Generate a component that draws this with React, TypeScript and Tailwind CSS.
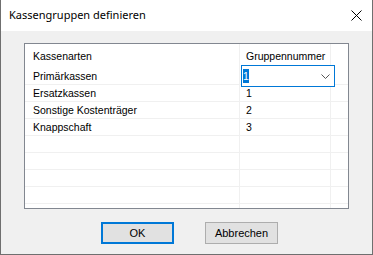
const rows = [
  { name: "Primärkassen", group: "" },
  { name: "Ersatzkassen", group: "1" },
  { name: "Sonstige Kostenträger", group: "2" },
  { name: "Knappschaft", group: "3" },
  { name: "", group: "" },
  { name: "", group: "" },
  { name: "", group: "" },
  { name: "", group: "" },
  { name: "", group: "" },
];

const cellFont = "font-['Liberation_Sans',Arial,sans-serif] text-[10.5px] text-black";

function GridRow({ name, group }: { name: string; group: string }) {
  return (
    <div className="flex h-[17px] shrink-0 border-b border-[#f0f0f0]">
      <div className="w-[215px] shrink-0 border-r border-[#f0f0f0] pl-[8px] leading-[17px]">{name}</div>
      <div className="w-[91px] shrink-0 border-r border-[#f0f0f0] pl-[6px] leading-[17px]">{group}</div>
      <div className="flex-1" />
    </div>
  );
}

export default function App() {
  return (
    <div className="w-[373px] h-[255px] flex flex-col bg-[#f0f0f0] border-l border-r border-b border-[#6f6f6f] overflow-hidden">
      <div className="h-[31px] shrink-0 bg-white flex items-center justify-between pl-[8px] pr-[9px]">
        <span className="font-['Noto_Sans',sans-serif] text-[11px] text-black">Kassengruppen definieren</span>
        <svg width="11" height="11" viewBox="0 0 11 11" className="mr-[1px]">
          <path d="M0.5 0.5 L10.5 10.5 M10.5 0.5 L0.5 10.5" stroke="#000" strokeWidth="1" />
        </svg>
      </div>

      <div className={`flex-1 flex flex-col ${cellFont}`}>
        <div className="relative mt-[12px] ml-[23px] w-[325px] h-[166px] border border-[#828790] bg-white overflow-hidden flex flex-col">
          <div className="flex h-[24px] shrink-0">
            <div className="w-[215px] shrink-0 border-r border-[#f0f0f0] pl-[8px] leading-[24px]">Kassenarten</div>
            <div className="w-[91px] shrink-0 border-r border-[#f0f0f0] pl-[6px] leading-[24px]">Gruppennummer</div>
            <div className="flex-1" />
          </div>
          {rows.map((r, i) => (
            <GridRow key={i} name={r.name} group={r.group} />
          ))}

          <div className="absolute left-[216px] top-[21px] w-[94px] h-[22px] border border-[#0078d7] bg-white flex items-center justify-between pl-[1px] pr-[4px]">
            <span className="bg-[#0078d7] text-white h-[14px] w-[6px] leading-[14px] flex justify-center">1</span>
            <svg width="9" height="5" viewBox="0 0 9 5">
              <path d="M0.5 0.5 L4.5 4.5 L8.5 0.5" stroke="#555" strokeWidth="1" fill="none" />
            </svg>
          </div>
        </div>

        <div className="flex justify-center gap-[31px] mt-[13px] pl-[6px]">
          <button className="w-[73px] h-[22px] border-2 border-[#0078d7] bg-[#e1e1e1] text-[11px]">OK</button>
          <button className="w-[73px] h-[22px] border border-[#adadad] bg-[#e1e1e1] text-[11px]">Abbrechen</button>
        </div>
      </div>
    </div>
  );
}
